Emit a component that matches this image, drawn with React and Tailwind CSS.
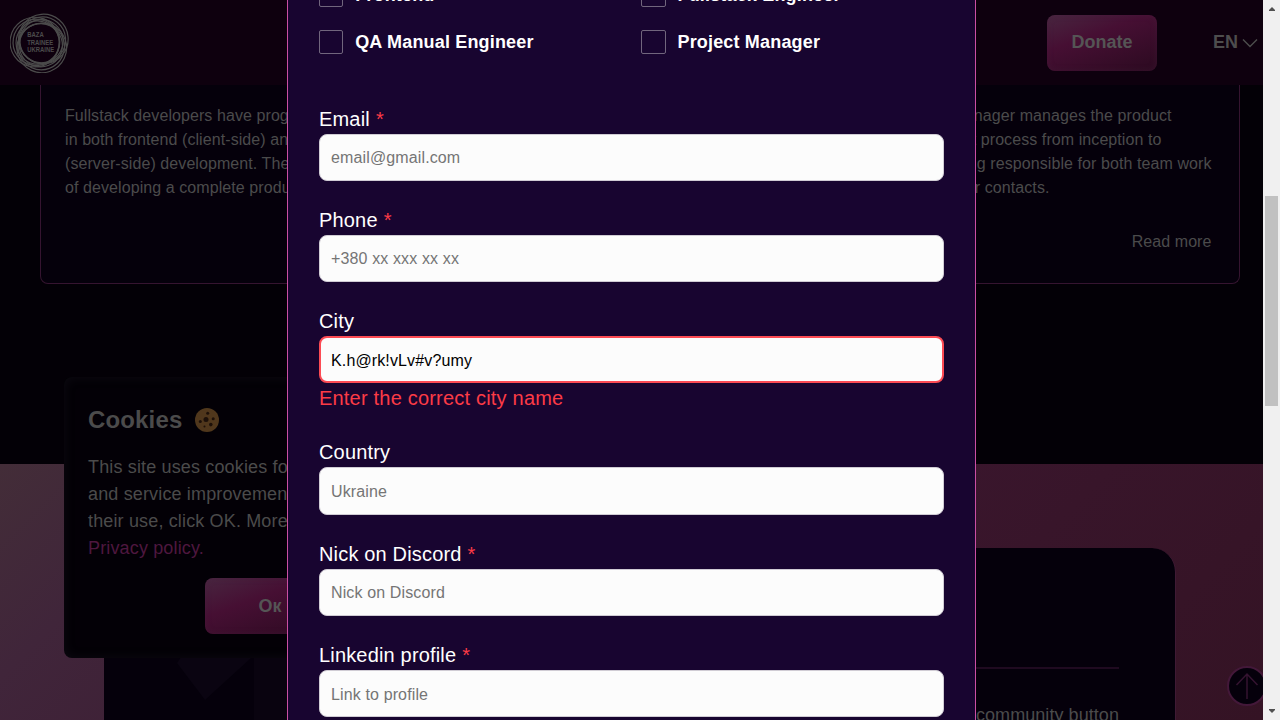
import React from 'react';

const fields = [
  { label: 'Email', required: true, placeholder: 'email@gmail.com', type: 'email' },
  { label: 'Phone', required: true, placeholder: '+380 xx xxx xx xx', type: 'tel' },
  { label: 'City', value: 'K.h@rk!vLv#v?umy', error: 'Enter the correct city name' },
  { label: 'Country', placeholder: 'Ukraine' },
  { label: 'Nick on Discord', required: true, placeholder: 'Nick on Discord' },
  { label: 'Linkedin profile', required: true, placeholder: 'Link to profile' },
];

const ringAngles = [-50, 70, 190];
const rings = [
  [5.2, 24.8],
  [3.8, 23.2],
  [2.4, 21.6],
];

function Logo() {
  return (
    <svg width="60" height="60" viewBox="0 0 60 60" fill="none" stroke="#4b4b4b" strokeWidth="1.2">
      {ringAngles.map((a) => (
        <g key={a} transform={`rotate(${a} 30 30)`}>
          {rings.map(([offset, r]) => (
            <circle key={r} cx={30 + offset} cy="30" r={r} />
          ))}
        </g>
      ))}
      <g fill="#4b4b4b" stroke="none" fontFamily="Liberation Sans, sans-serif" fontSize="6.4" fontWeight="bold">
        <text x="17.2" y="23.6" textLength="16.500" lengthAdjust="spacingAndGlyphs">BAZA</text>
        <text x="17.2" y="31.6" textLength="26" lengthAdjust="spacingAndGlyphs">TRAINEE</text>
        <text x="17.2" y="39.2" textLength="27" lengthAdjust="spacingAndGlyphs">UKRAINE</text>
      </g>
    </svg>
  );
}

function GradientButton({ children, className }) {
  return (
    <button
      className={`flex items-center justify-center rounded-lg bg-[linear-gradient(160deg,#482640_0%,#460f33_38%,#2b0a20_100%)] text-[18px] font-bold text-[#555] shadow-[inset_0_0_6px_rgba(75,35,65,0.4)] ${className}`}
    >
      {children}
    </button>
  );
}

function Header() {
  return (
    <header className="flex h-[85px] shrink-0 items-center justify-between bg-[#0e000e] pl-2.5 pr-[5px]">
      <Logo />
      <div className="flex items-center">
        <GradientButton className="h-14 w-[110px]">Donate</GradientButton>
        <div className="ml-14 flex items-center gap-1 text-[18px] font-bold text-[#4d4d4d]">
          EN
          <svg width="16" height="10" viewBox="0 0 16 10" fill="none" stroke="#4d4d4d" strokeWidth="1.4">
            <path d="M1 1.5 8 8.5 15 1.5" />
          </svg>
        </div>
      </div>
    </header>
  );
}

function Roles() {
  return (
    <section className="flex h-[379px] shrink-0 justify-between bg-[#030006] pr-[23px] pl-10 text-base leading-6 tracking-[0.08px] text-[#4b4b4b]">
      <article className="h-[199px] w-[590px] rounded-b-lg border border-t-0 border-[#351430] bg-[#05000b] px-6 pt-[19px]">
        <p>
          Fullstack developers have programming skills<br />
          in both frontend (client-side) and backend<br />
          (server-side) development. They are capable<br />
          of developing a complete product.
        </p>
      </article>
      <article className="flex h-[199px] w-[590px] flex-col items-end rounded-b-lg border border-t-0 border-[#351430] bg-[#05000b] pr-[27.5px] pt-[19px]">
        <p className="w-[321px] whitespace-nowrap">
          <span className="flex w-[281px] justify-end">Project Manager manages the product</span>
          <span className="flex w-[271px] justify-end">development process from inception to</span>
          <span className="flex w-[321px] justify-end">release, being responsible for both team work</span>
          <span className="flex w-[159px] justify-end">and customer contacts.</span>
        </p>
        <a className="mt-[30px]">Read more</a>
      </article>
    </section>
  );
}

function Community() {
  return (
    <section className="flex min-h-0 grow bg-[linear-gradient(135deg,#432d38_0%,#40253a_14%,#3a162d_60%,#341324_100%)] pl-[104px] pr-[87px] pt-[84px]">
      <div className="flex grow justify-between overflow-hidden rounded-t-3xl border-r border-[#3f1a34] bg-[#05000b]">
        <svg className="mt-[100px] shrink-0" width="230" height="72" viewBox="0 0 230 72">
          <path d="M73 15 83 0H158L101 52Z" fill="#0a0411" />
          <path d="M150 0H230V72H150Z" fill="#09030f" />
        </svg>
        <div className="flex w-[400px] flex-col items-end pr-14 text-[18px] leading-[27px] tracking-[0.06px] text-[#4b4b4b]">
          <div className="mt-[119px] h-0.5 w-full shrink-0 bg-[#1f0a20]" />
          <p className="mt-[33px] whitespace-nowrap">the community button</p>
        </div>
      </div>
    </section>
  );
}

function CookieIcon() {
  return (
    <svg width="24" height="24" viewBox="0 0 24 24">
      <circle cx="12" cy="12" r="12" fill="#50371c" />
      <g fill="#1d1009">
        <circle cx="11" cy="11.5" r="2.5" />
        <circle cx="12.7" cy="5.2" r="1.5" />
        <circle cx="18.2" cy="10.7" r="1.5" />
        <circle cx="5.3" cy="13.5" r="1.5" />
        <circle cx="15.8" cy="16.6" r="1.8" />
        <circle cx="9.5" cy="18.6" r="1" />
      </g>
    </svg>
  );
}

function CookieNotice() {
  return (
    <aside className="absolute left-16 top-[377px] h-[281px] w-[392px] rounded-lg bg-[#030006] px-6 pt-[25px] text-[#4b4b4b] shadow-[inset_0_0_12px_rgba(60,55,70,0.18)]">
      <h2 className="flex items-center gap-[13px] text-2xl leading-9 font-bold tracking-[0.15px]">
        Cookies <CookieIcon />
      </h2>
      <p className="mt-4 text-[18px] leading-[27px] tracking-[0.15px] whitespace-nowrap">
        This site uses cookies for analytics<br />
        and service improvement. To accept<br />
        their use, click OK. More details in<br />
        <a className="text-[#4e173f]">Privacy policy.</a>
      </p>
      <GradientButton className="mt-4 ml-[117px] h-14 w-[130px]">Ок</GradientButton>
    </aside>
  );
}

function Checkbox({ label }) {
  return (
    <label className="flex items-center gap-[11.8px] text-[18px] leading-[25px] font-bold tracking-[0.17px] text-white">
      <span className="size-[24.4px] shrink-0 rounded-[2px] border border-[#71667d]" />
      {label}
    </label>
  );
}

function Field({ label, required, error, ...input }) {
  return (
    <div>
      <label className="flex h-[30px] items-center gap-1.5 text-xl tracking-[0.17px] text-white">
        {label}
        {required && <span className="text-[#fc3b46]">*</span>}
      </label>
      <input
        readOnly
        className={`block h-[47.33px] w-full rounded-lg bg-[#fcfcfc] pt-[1.8px] text-base tracking-[0.13px] text-black placeholder:text-[#757575] ${
          error ? 'border-2 border-[#fc4b54] px-2.5' : 'border border-[#d0ccd4] px-[11px]'
        }`}
        {...input}
      />
      {error && <p className="h-[29.8px] text-xl leading-[30px] tracking-[0.2px] text-[#fc3b46]">{error}</p>}
    </div>
  );
}

function ApplicationForm() {
  return (
    <div className="absolute inset-y-0 left-[287px] w-[689px] overflow-hidden border-x border-[#ca4fa3] bg-[#180530] px-[31px]">
      <div className="-mt-[17.3px] grid grid-cols-[322.3px_1fr] gap-y-[22px]">
        <Checkbox label="Frontend" />
        <Checkbox label="Fullstack Engineer" />
        <Checkbox label="QA Manual Engineer" />
        <Checkbox label="Project Manager" />
      </div>
      <form className="mt-[48.8px] flex flex-col gap-6">
        {fields.map((f) => (
          <Field key={f.label} {...f} />
        ))}
      </form>
    </div>
  );
}

function Scrollbar() {
  return (
    <div className="flex w-[17px] shrink-0 flex-col items-center bg-[#f0f0f0]">
      <svg width="17" height="17" viewBox="0 0 17 17" fill="#505050">
        <path d="M6 11V10L9 7 12 10V11Z" />
      </svg>
      <div className="mt-[179px] h-[210px] w-[13px] bg-[#c1c1c1]" />
      <svg className="mt-auto" width="17" height="17" viewBox="0 0 17 17" fill="#505050">
        <path d="M6 6V7L9 10 12 7V6Z" />
      </svg>
    </div>
  );
}

export default function App() {
  return (
    <div className="flex h-[720px] w-[1280px] overflow-hidden font-['Liberation_Sans',Arial,sans-serif]">
      <div className="relative flex w-[1263px] flex-col overflow-hidden">
        <Header />
        <Roles />
        <Community />
        <CookieNotice />
        <button className="absolute top-[666px] left-[1227px] flex size-10 items-center justify-center rounded-full border-2 border-[#431839] bg-[#05000b]">
          <svg className="shrink-0" width="24" height="28" viewBox="0 0 24 28" fill="none" stroke="#351331" strokeWidth="1.5">
            <path d="M12 27V2M1.5 13 12 2 22.500 13" />
          </svg>
        </button>
        <ApplicationForm />
      </div>
      <Scrollbar />
    </div>
  );
}
